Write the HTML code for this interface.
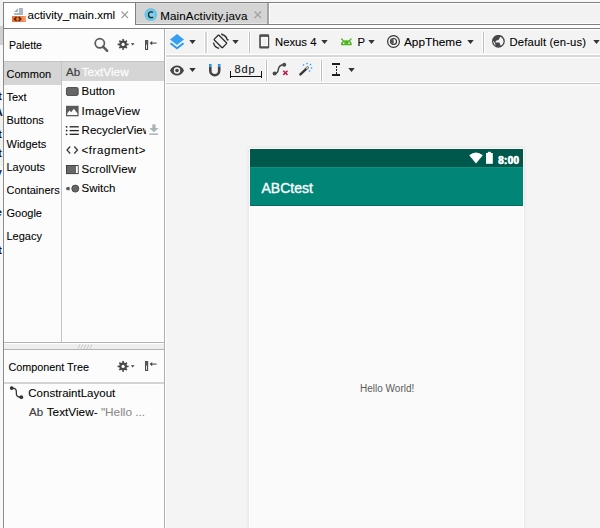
<!DOCTYPE html>
<html><head><meta charset="utf-8">
<style>
*{box-sizing:border-box;margin:0;padding:0}
html,body{width:600px;height:528px;overflow:hidden;background:#f3f3f3;font-family:"Liberation Sans",sans-serif;color:#000}
.a{position:absolute}
.t{position:absolute;white-space:pre;line-height:1;-webkit-text-stroke:0.08px currentColor}
.ln{position:absolute;background:#7f7f7f}
</style></head><body>
<!-- left artifact strip -->
<div class="a" style="left:0;top:0;width:3px;height:26px;background:#f0f0f0"></div>
<div class="a" style="left:0;top:26px;width:3px;height:19px;background:#d0d0d0"></div>
<div class="a" style="left:0;top:45px;width:3px;height:483px;background:#f8f8f8"></div>

<!-- left artifacts -->
<div class="a" style="left:0;top:108px;width:3px;height:58px;background:#eef2ea"></div>
<div class="a" style="left:0;top:85px;width:3px;height:180px;overflow:hidden">
<div class="t" style="left:-2px;top:6.07px;font-size:11.5px;color:#1a0a10;font-weight:bold">t</div>

<div class="t" style="left:-5.5px;top:22.07px;font-size:11.5px;color:#1a1a3a;font-weight:bold">A</div>

<div class="t" style="left:-2px;top:44.07px;font-size:11.5px;color:#1a0a10;font-weight:bold">t</div>

<div class="t" style="left:-2px;top:63.07px;font-size:11.5px;color:#1a0a10;font-weight:bold">t</div>

<div class="t" style="left:-4.5px;top:82.07px;font-size:11.5px;color:#2a2a5a;font-weight:bold">v</div>

<div class="t" style="left:-4.5px;top:122.07px;font-size:11.5px;color:#0a1a3a;font-weight:bold">e</div>

<div class="t" style="left:-2px;top:160.07px;font-size:11.5px;color:#1a0a10;font-weight:bold">t</div>

</div>
<!-- tab bar -->
<div class="a" style="left:3px;top:0;width:597px;height:2px;background:#f7f7f7"></div>
<div class="a" style="left:269px;top:3px;width:331px;height:20px;background:#f2f2f2"></div>
<div class="a" style="left:269px;top:3px;width:331px;height:1px;background:#fff"></div>
<div class="a" style="left:269px;top:23px;width:331px;height:1px;background:#fff"></div>
<div class="ln" style="left:135px;top:24px;width:465px;height:1px"></div>
<div class="a" style="left:135px;top:25px;width:465px;height:3px;background:#fff"></div>
<div class="ln" style="left:3px;top:2px;width:597px;height:1px"></div>
<div class="ln" style="left:3px;top:28px;width:597px;height:1px"></div>
<!-- tab1 -->
<div class="a" style="left:4px;top:3px;width:131px;height:25px;background:#fff"></div>
<div class="ln" style="left:3px;top:2px;width:1px;height:27px"></div>
<!-- tab2 -->
<div class="a" style="left:136px;top:3px;width:131px;height:21px;background:#d4d4d4"></div>
<div class="a" style="left:136px;top:3px;width:131px;height:1px;background:#dedede"></div>
<div class="a" style="left:136px;top:23px;width:131px;height:1px;background:#e4e4e4"></div>
<div class="ln" style="left:135px;top:2px;width:1px;height:23px"></div>
<div class="a" style="left:267px;top:3px;width:2px;height:21px;background:#a3a3a3"></div><div class="a" style="left:269px;top:3px;width:1px;height:21px;background:#fff"></div>

<!-- xml icon -->
<svg class="a" style="left:12px;top:7px" width="16" height="16" viewBox="0 0 16 16">
  <path d="M6.9 1 L11 1 L11 7.9 L2 7.9 L2 5.9 L6.9 5.9 Z" fill="#a9b8c5"/>
  <path d="M2 5.1 L5.9 1.2 L5.9 5.1 Z" fill="#9aabb9"/>
  <defs><linearGradient id="og" x1="0" x2="1"><stop offset="0.55" stop-color="#f3742f"/><stop offset="1" stop-color="#f5a27b"/></linearGradient></defs>
  <rect x="0" y="9" width="14" height="6" fill="url(#og)"/>
  <path d="M4.6 10 L2.5 12 L4.6 14 M6.6 10 L8.7 12 L6.6 14" stroke="#3a2a22" stroke-width="1.5" fill="none"/>
</svg>
<div class="t" style="left:27.5px;top:10.30px;font-size:11.5px">activity_main.xml</div>
<svg class="a" style="left:121px;top:11px" width="8" height="8" viewBox="0 0 8 8"><path d="M0.5 0.5 L7 7 M7 0.5 L0.5 7" stroke="#a0a0a0" stroke-width="1.2"/></svg>

<!-- java icon -->
<svg class="a" style="left:143px;top:7px" width="16" height="16" viewBox="0 0 16 16">
  <circle cx="7.85" cy="7.55" r="7.1" fill="#e9d4cc"/>
  <circle cx="7.85" cy="7.55" r="6.5" fill="#6ec6e6"/>
  <circle cx="7.85" cy="7.55" r="3.5" fill="#7fd2ef"/>
  <path d="M9.9 5.5 Q9.2 4.9 8.1 4.9 Q5.5 4.9 5.5 7.8 Q5.5 10.6 8.1 10.6 Q9.2 10.6 9.9 10.1" stroke="#222" stroke-width="1.3" fill="none"/>
</svg>
<div class="t" style="left:160.3px;top:9.58px;font-size:11.6px;letter-spacing:0.1px">MainActivity.java</div>
<svg class="a" style="left:254px;top:11px" width="8" height="8" viewBox="0 0 8 8"><path d="M0.5 0.5 L7 7 M7 0.5 L0.5 7" stroke="#a0a0a0" stroke-width="1.2"/></svg>

<!-- palette panel -->
<div class="a" style="left:3px;top:29px;width:1px;height:499px;background:#8c8c8c"></div>
<div class="a" style="left:4px;top:29px;width:160px;height:313px;background:#fcfcfc"></div>
<div class="a" style="left:164px;top:29px;width:1px;height:499px;background:#b0b0b0"></div>
<div class="a" style="left:165px;top:29px;width:1px;height:499px;background:#fff"></div>
<div class="t" style="left:9.0px;top:39.83px;font-size:10.6px">Palette</div>


<!-- palette header icons -->
<svg class="a" style="left:92.3px;top:36.4px" width="18" height="18" viewBox="0 0 18 18">
  <circle cx="7.8" cy="7.3" r="4.6" stroke="#5a5a5a" stroke-width="1.7" fill="none"/>
  <path d="M11 10.6 L15.2 14.8" stroke="#5a5a5a" stroke-width="2.4" stroke-linecap="round"/>
</svg>
<svg class="a" style="left:116px;top:37px" width="20" height="15" viewBox="0 0 20 15">
  <g transform="translate(7.1,7.4)" fill="#4a4a4a">
    <circle r="3.8"/>
    <rect x="-0.8" y="-5.5" width="1.6" height="11"/>
    <rect x="-5.5" y="-0.8" width="11" height="1.6"/>
    <rect x="-0.8" y="-5.3" width="1.6" height="10.6" transform="rotate(45)"/>
    <rect x="-0.8" y="-5.3" width="1.6" height="10.6" transform="rotate(-45)"/>
  </g>
  <circle cx="7.1" cy="7.4" r="1.6" fill="#fcfcfc"/>
  <path d="M14.8 6.3 L18.6 6.3 L16.7 8.6 Z" fill="#444"/>
</svg>
<svg class="a" style="left:144px;top:38px" width="16" height="14" viewBox="0 0 16 14">
  <rect x="1.6" y="2.6" width="2" height="8.8" stroke="#333" stroke-width="1" fill="#fff"/>
  <rect x="1.1" y="2.1" width="3" height="4.5" fill="#555"/>
  <path d="M7 5.1 L12.6 5.1" stroke="#666" stroke-width="1.3"/>
  <path d="M5.6 5.1 L8.2 3 L8.2 7.2 Z" fill="#444"/>
</svg>

<!-- toolbar 1 -->
<div class="a" style="left:166px;top:29px;width:434px;height:1px;background:#fff"></div>
<div class="a" style="left:166px;top:30px;width:434px;height:24px;background:#f3f3f3"></div>
<div class="a" style="left:166px;top:54px;width:434px;height:1px;background:#fff"></div>
<div class="a" style="left:166px;top:55px;width:434px;height:2px;background:#d6d6d6"></div>
<div class="a" style="left:166px;top:57px;width:434px;height:1px;background:#fff"></div>
<!-- toolbar 2 -->
<div class="a" style="left:166px;top:58px;width:434px;height:24px;background:#f3f3f3"></div>
<div class="a" style="left:166px;top:82px;width:434px;height:1px;background:#fff"></div>
<div class="a" style="left:166px;top:83px;width:434px;height:1px;background:#c9c9c9"></div>
<div class="a" style="left:166px;top:84px;width:434px;height:2px;background:#f8f8f8"></div>

<!-- layers icon -->
<svg class="a" style="left:168px;top:32px" width="18" height="20" viewBox="0 0 18 20">
  <path d="M9 2 L16 7.5 L9 13 L2 7.5 Z" fill="#359ff0"/>
  <path d="M2.5 11.2 L9 16.2 L15.5 11.2" stroke="#2d98ee" stroke-width="2" fill="none"/>
</svg>
<svg class="a" style="left:189px;top:39px" width="9" height="6"><path d="M0.3 0.9 L6.7 0.9 L3.5 5.1 Z" fill="#333"/></svg>
<div class="a" style="left:204px;top:32px;width:4px;height:21px;background:#fff"></div><div class="a" style="left:205px;top:32px;width:2px;height:21px;background:#d4d4d4"></div>
<!-- rotate icon -->
<svg class="a" style="left:212px;top:33px" width="18" height="18" viewBox="0 0 18 18">
  <path d="M9.6 1.5 A7 7 0 0 1 15.3 7.2 M7.2 15.3 A7 7 0 0 1 1.5 9.6" stroke="#2e2e2e" stroke-width="1.3" fill="none"/>
  <path d="M9.2 1.2 L10.6 1.2 M16 7.6 L15.8 6" stroke="#2e2e2e" stroke-width="1.3"/>
  <rect x="5.1" y="2.5" width="6.6" height="11.8" rx="0.6" transform="rotate(-45 8.4 8.4)" stroke="#2e2e2e" stroke-width="1.3" fill="#f2f2f2"/>
</svg>
<svg class="a" style="left:232px;top:39px" width="9" height="6"><path d="M0.3 0.9 L6.7 0.9 L3.5 5.1 Z" fill="#333"/></svg>
<div class="a" style="left:248px;top:32px;width:3px;height:21px;background:#fff"></div><div class="a" style="left:249px;top:32px;width:1px;height:21px;background:#bdbdbd"></div>
<!-- device -->
<svg class="a" style="left:258px;top:33px" width="13" height="17" viewBox="0 0 13 17">
  <rect x="1.2" y="1.2" width="10" height="14.3" rx="1.3" fill="#4e4e4e"/>
  <rect x="2.9" y="3.9" width="7.1" height="9.35" fill="#fafafa"/>
  <rect x="4.3" y="5.2" width="4.3" height="6.8" fill="#f0f0f0"/>
</svg>
<div class="t" style="left:275.0px;top:36.83px;font-size:11.3px">Nexus 4</div>
<svg class="a" style="left:321px;top:39px" width="9" height="6"><path d="M0.3 0.9 L6.7 0.9 L3.5 5.1 Z" fill="#333"/></svg>
<!-- android -->
<svg class="a" style="left:339px;top:36px" width="15" height="11" viewBox="0 0 15 11">
  <path d="M2 9.2 L2 8 Q2.4 4.3 7.35 4.3 Q12.3 4.3 12.7 8 L12.7 9.2 Z" fill="#4fb41f"/>
  <path d="M2.6 3 L5 5.4 M12.1 3 L9.7 5.4" stroke="#4fb41f" stroke-width="1.3" stroke-linecap="round"/>
  <rect x="4" y="6.4" width="1.4" height="1.6" fill="#f2f2f2"/><rect x="9.3" y="6.4" width="1.4" height="1.6" fill="#f2f2f2"/>
</svg>
<div class="t" style="left:357.5px;top:36.83px;font-size:11.3px">P</div>
<svg class="a" style="left:368px;top:39px" width="9" height="6"><path d="M0.3 0.9 L6.7 0.9 L3.5 5.1 Z" fill="#333"/></svg>
<!-- theme icon -->
<svg class="a" style="left:385px;top:34px" width="16" height="16" viewBox="0 0 16 16">
  <circle cx="8.5" cy="7.5" r="5.9" stroke="#333" stroke-width="1.2" fill="none"/>
  <circle cx="8.5" cy="7.5" r="3.0" stroke="#333" stroke-width="1.2" fill="#fff"/>
  <path d="M8.3 4.5 A3 3 0 0 0 8.3 10.5 Q9.3 7.5 8.3 4.5 Z" fill="#555"/>
</svg>
<div class="t" style="left:404.0px;top:36.81px;font-size:11.8px">AppTheme</div>
<svg class="a" style="left:467px;top:39px" width="9" height="6"><path d="M0.3 0.9 L6.7 0.9 L3.5 5.1 Z" fill="#333"/></svg>
<div class="a" style="left:482px;top:32px;width:3px;height:21px;background:#fff"></div><div class="a" style="left:483px;top:32px;width:1px;height:21px;background:#bdbdbd"></div>
<!-- globe -->
<svg class="a" style="left:491px;top:35px" width="15" height="15" viewBox="0 0 15 15">
  <defs><clipPath id="gc"><circle cx="7.4" cy="6.3" r="5.1"/></clipPath></defs>
  <circle cx="7.4" cy="6.3" r="6.4" fill="#474747"/>
  <g clip-path="url(#gc)" fill="#f4f4f4">
    <path d="M9.2 1.8 Q13 3 13 7 Q13 10 9.8 10.8 L9 9.2 Q9.3 7.8 8 7.5 L4.6 7.4 Q4.2 6.2 5.6 5.5 Q7.8 5.2 8.3 3.8 Z"/>
    <path d="M1.5 5.6 Q2.8 5.6 3.4 7.2 Q4.4 8.6 4.4 10 Q4.8 11.2 6 12.5 Q1.5 12 1.5 5.6 Z"/>
  </g>
</svg>
<div class="t" style="left:509.5px;top:36.83px;font-size:11.3px;letter-spacing:0.13px">Default (en-us)</div>
<svg class="a" style="left:593px;top:39px" width="9" height="6"><path d="M0.3 0.9 L6.7 0.9 L3.5 5.1 Z" fill="#333"/></svg>

<!-- toolbar 2 icons -->
<svg class="a" style="left:169px;top:63.5px" width="16" height="13" viewBox="0 0 16 13">
  <path d="M1 6.5 Q3.5 1.5 8 1.5 Q12.5 1.5 15 6.5 Q12.5 11.5 8 11.5 Q3.5 11.5 1 6.5 Z" fill="#454545"/>
  <circle cx="8" cy="6.5" r="3.2" fill="#f3f3f3"/>
  <circle cx="8" cy="6.5" r="1.8" fill="#454545"/>
</svg>
<svg class="a" style="left:189px;top:67px" width="9" height="6"><path d="M0.3 0.9 L6.7 0.9 L3.5 5.1 Z" fill="#333"/></svg>
<svg class="a" style="left:207px;top:63px" width="15" height="14" viewBox="0 0 15 14">
  <path d="M3.3 3.5 L3.3 7.8 A4.45 4.45 0 0 0 12.2 7.8 L12.2 3.5" stroke="#444" stroke-width="2.6" fill="none"/>
  <rect x="2" y="1" width="2.6" height="2.6" fill="#2196f3"/>
  <rect x="10.9" y="1" width="2.6" height="2.6" fill="#2196f3"/>
</svg>
<div class="a" style="left:230px;top:71px;width:1px;height:7px;background:#111"></div>
<div class="a" style="left:261px;top:71px;width:1px;height:7px;background:#111"></div>
<div class="a" style="left:230px;top:76px;width:32px;height:1px;background:#111"></div>
<div class="t" style="left:234.5px;top:63.79px;font-size:11.0px;color:#111;letter-spacing:0.9px">8dp</div>
<div class="a" style="left:265px;top:60px;width:3px;height:21px;background:#fff"></div><div class="a" style="left:266px;top:60px;width:1px;height:21px;background:#bdbdbd"></div>
<svg class="a" style="left:272px;top:61px" width="19" height="17" viewBox="0 0 19 17">
  <path d="M2.6 12.6 Q5.6 12.8 6.3 8.5 Q7 3.8 12.2 3.8" stroke="#444" stroke-width="1.5" fill="none"/>
  <circle cx="2.6" cy="12.6" r="2" fill="#4a4a4a"/><circle cx="12.2" cy="3.8" r="2" fill="#4a4a4a"/>
  <path d="M11.3 9.7 L15.5 13.9 M15.5 9.7 L11.3 13.9" stroke="#b81e4a" stroke-width="1.5"/>
</svg>
<svg class="a" style="left:297px;top:61px" width="17" height="16" viewBox="0 0 17 16">
  <path d="M3.4 13.4 L10.6 6.6" stroke="#3a3a3a" stroke-width="2.5" stroke-linecap="round"/>
  <path d="M9.7 7.5 L10.7 6.5" stroke="#d8d8d8" stroke-width="1.3" stroke-linecap="round"/>
  <g fill="#2b9cf0"><rect x="5.8" y="3.3" width="1.4" height="1.4"/><rect x="9.3" y="1.8" width="1.4" height="1.4"/><rect x="12.8" y="2.8" width="1.4" height="1.4"/><rect x="13.8" y="6.3" width="1.4" height="1.4"/><rect x="11.8" y="9.3" width="1.4" height="1.4"/></g>
</svg>
<div class="a" style="left:320px;top:60px;width:3px;height:21px;background:#fff"></div><div class="a" style="left:321px;top:60px;width:1px;height:21px;background:#bdbdbd"></div>
<div class="a" style="left:332px;top:63px;width:8px;height:2px;background:#1e1e1e"></div>
<div class="a" style="left:332px;top:74px;width:8px;height:2px;background:#1e1e1e"></div>
<div class="a" style="left:335.5px;top:66px;width:1.6px;height:1.6px;background:#1e1e1e"></div>
<div class="a" style="left:335.5px;top:69px;width:1.6px;height:1.6px;background:#1e1e1e"></div>
<div class="a" style="left:335.5px;top:72px;width:1.6px;height:1.6px;background:#1e1e1e"></div>
<svg class="a" style="left:348px;top:67px" width="9" height="6"><path d="M0.3 0.9 L6.7 0.9 L3.5 5.1 Z" fill="#333"/></svg>


<!-- palette body -->
<div class="a" style="left:4px;top:61px;width:57px;height:24px;background:#d5d5d5"></div>
<div class="a" style="left:62px;top:61px;width:102px;height:20px;background:#d5d5d5"></div>
<div class="a" style="left:61px;top:61px;width:1px;height:281px;background:#c4c4c4"></div>
<div class="a" style="left:4px;top:60px;width:160px;height:1px;background:#fff"></div>
<div class="a" style="left:4px;top:61px;width:160px;height:1px;background:#c3c3c3"></div>
<div class="a" style="left:4px;top:342px;width:160px;height:1px;background:#b4b4b4"></div>
<div class="a" style="left:4px;top:343px;width:160px;height:1px;background:#fff"></div>
<div class="a" style="left:4px;top:344px;width:160px;height:5px;background:#efefef"></div>
<div class="a" style="left:4px;top:349px;width:160px;height:1px;background:#b4b4b4"></div>
<div class="a" style="left:4px;top:350px;width:160px;height:178px;background:#fcfcfc"></div>
<div class="a" style="left:4px;top:381px;width:160px;height:4px;background:#fff"></div><div class="a" style="left:4px;top:382px;width:160px;height:2px;background:#d4d4d4"></div>
<div class="t" style="left:6.5px;top:69.19px;font-size:11.0px">Common</div>

<div class="t" style="left:6.5px;top:92.09px;font-size:11.0px">Text</div>

<div class="t" style="left:6.5px;top:115.09px;font-size:11.0px">Buttons</div>

<div class="t" style="left:6.5px;top:138.69px;font-size:11.0px">Widgets</div>

<div class="t" style="left:6.5px;top:162.29px;font-size:11.0px">Layouts</div>

<div class="t" style="left:6.5px;top:184.89px;font-size:11.0px">Containers</div>

<div class="t" style="left:6.5px;top:207.99px;font-size:11.0px">Google</div>

<div class="t" style="left:6.5px;top:231.09px;font-size:11.0px">Legacy</div>

<div class="t" style="left:66.0px;top:66.77px;font-size:11.5px;color:#404040;-webkit-text-stroke:0.2px #404040">Ab</div>

<div class="t" style="left:81.7px;top:66.51px;font-size:11.8px;color:#fbfbfb;-webkit-text-stroke:0.3px #fbfbfb">TextView</div>

<div class="t" style="left:81.6px;top:86.07px;font-size:11.5px">Button</div>

<div class="t" style="left:81.6px;top:106.07px;font-size:11.5px;letter-spacing:0.2px">ImageView</div>

<div class="a" style="left:0;top:0;width:146px;height:200px;overflow:hidden"><div class="t" style="left:81.6px;top:125.27px;font-size:11.5px">RecyclerView</div>
</div>
<div class="t" style="left:81.6px;top:144.67px;font-size:11.5px;letter-spacing:0.55px">&lt;fragment&gt;</div>

<div class="t" style="left:81.6px;top:164.07px;font-size:11.5px;letter-spacing:0.1px">ScrollView</div>

<div class="t" style="left:81.6px;top:183.37px;font-size:11.5px">Switch</div>

<div class="t" style="left:8.5px;top:361.96px;font-size:10.8px">Component Tree</div>

<div class="t" style="left:28.3px;top:388.37px;font-size:11.5px">ConstraintLayout</div>

<div class="t" style="left:29.0px;top:407.07px;font-size:11.5px;color:#404040;-webkit-text-stroke:0.2px #404040">Ab</div>

<div class="t" style="left:46.7px;top:406.81px;font-size:11.8px">TextView- <span style="color:#8a8a8a">"Hello ...</span></div>


<!-- palette item icons -->
<svg class="a" style="left:65px;top:86px" width="15" height="11" viewBox="0 0 15 11"><rect x="1.45" y="1.55" width="11.7" height="7.9" rx="1.4" fill="#676767" stroke="#444" stroke-width="0.9"/></svg>
<svg class="a" style="left:65px;top:105px" width="15" height="12" viewBox="0 0 15 12"><rect x="1" y="0.8" width="12.6" height="10.5" fill="#5a5a5a"/><path d="M2.2 10 L2.2 8.6 L4.5 5.4 L6.2 7.3 L8.8 3.8 L12.4 8.2 L12.4 10 Z" fill="#fcfcfc"/></svg>
<svg class="a" style="left:65px;top:125px" width="15" height="12" viewBox="0 0 15 12"><g fill="#222"><circle cx="1.6" cy="1.8" r="0.9"/><circle cx="1.6" cy="5.6" r="0.9"/><circle cx="1.6" cy="9.3" r="0.9"/><rect x="4.6" y="1.15" width="9.2" height="1.3"/><rect x="4.6" y="4.95" width="9.2" height="1.3"/><rect x="4.6" y="8.65" width="9.2" height="1.3"/></g></svg>
<svg class="a" style="left:146px;top:123px" width="14" height="13" viewBox="0 0 14 13"><rect x="6.3" y="1.4" width="3.3" height="4" fill="#aab2ba"/><path d="M3.3 4.9 L12.6 4.9 L7.95 9.2 Z" fill="#aab2ba"/><rect x="3.2" y="10.4" width="8.8" height="1.5" fill="#aab2ba"/></svg>
<svg class="a" style="left:65px;top:145px" width="15" height="10" viewBox="0 0 15 10"><path d="M5.2 1.5 L2 5 L5.2 8.5 M9.3 1.5 L12.5 5 L9.3 8.5" stroke="#3a3a3a" stroke-width="1.3" fill="none"/></svg>
<svg class="a" style="left:65px;top:164px" width="15" height="11" viewBox="0 0 15 11"><rect x="1.45" y="1.45" width="11.7" height="8.2" fill="#676767" stroke="#3a3a3a" stroke-width="0.9"/><rect x="11" y="2" width="1.8" height="7" fill="#fcfcfc"/></svg>
<svg class="a" style="left:65px;top:183px" width="15" height="11" viewBox="0 0 15 11"><path d="M4.6 3.9 L2.8 3.9 Q1 3.9 1 5.6 Q1 7.3 2.8 7.3 L4.6 7.3 Z" fill="#555"/><circle cx="10.3" cy="5.6" r="3.5" fill="#676767" stroke="#444" stroke-width="0.9"/></svg>

<!-- splitter grip -->
<svg class="a" style="left:77px;top:344px" width="17" height="5" viewBox="0 0 17 5"><path d="M1 4.5 L3 0.5 M4 4.5 L6 0.5 M7 4.5 L9 0.5 M10 4.5 L12 0.5 M13 4.5 L15 0.5" stroke="#a8a8a8" stroke-width="0.9" stroke-dasharray="1 0.6"/></svg>

<!-- component tree header icons -->
<svg class="a" style="left:116px;top:359px" width="20" height="15" viewBox="0 0 20 15">
  <g transform="translate(7.1,7.4)" fill="#4a4a4a">
    <circle r="3.8"/>
    <rect x="-0.8" y="-5.5" width="1.6" height="11"/>
    <rect x="-5.5" y="-0.8" width="11" height="1.6"/>
    <rect x="-0.8" y="-5.3" width="1.6" height="10.6" transform="rotate(45)"/>
    <rect x="-0.8" y="-5.3" width="1.6" height="10.6" transform="rotate(-45)"/>
  </g>
  <circle cx="7.1" cy="7.4" r="1.6" fill="#fcfcfc"/>
  <path d="M14.8 6.3 L18.6 6.3 L16.7 8.6 Z" fill="#444"/>
</svg>
<svg class="a" style="left:144px;top:359px" width="16" height="14" viewBox="0 0 16 14">
  <rect x="1.6" y="2.6" width="2" height="8.8" stroke="#333" stroke-width="1" fill="#fff"/>
  <rect x="1.1" y="2.1" width="3" height="4.5" fill="#555"/>
  <path d="M7 5.1 L12.6 5.1" stroke="#666" stroke-width="1.3"/>
  <path d="M5.6 5.1 L8.2 3 L8.2 7.2 Z" fill="#444"/>
</svg>
<!-- constraint layout icon -->
<svg class="a" style="left:9px;top:385px" width="15" height="15" viewBox="0 0 15 15">
  <path d="M2.7 3.1 Q6.8 2.9 7.3 5.8 L7.4 9.4 Q7.8 12.2 12.3 12.2" stroke="#333" stroke-width="1.25" fill="none"/>
  <circle cx="2.7" cy="3.1" r="1.9" fill="#333"/><circle cx="12.3" cy="12.2" r="1.9" fill="#333"/>
</svg>
<!-- canvas + phone -->
<div class="a" style="left:166px;top:86px;width:434px;height:442px;background:#f4f4f4"></div>
<div class="a" style="left:249px;top:148px;width:275px;height:390px;background:#fff;box-shadow:0 0 3px 1px rgba(0,0,0,0.06)"></div>
<div class="a" style="left:250px;top:149px;width:273px;height:379px;background:#fafafa"></div>
<div class="a" style="left:250px;top:149px;width:273px;height:18px;background:#00574b"></div>
<div class="a" style="left:250px;top:167px;width:273px;height:39px;background:#008577"></div><div class="a" style="left:250px;top:167px;width:273px;height:1px;background:#11907f"></div><div class="a" style="left:250px;top:205px;width:273px;height:1px;background:#006f62"></div><div class="a" style="left:250px;top:206px;width:273px;height:2px;background:#fff"></div>
<svg class="a" style="left:468px;top:151.5px" width="16" height="13" viewBox="0 0 16 13"><path d="M1.2 3.2 Q8 -2 14.8 3.2 L8 11.6 Z" fill="#fff"/></svg>
<svg class="a" style="left:485px;top:151px" width="9" height="14" viewBox="0 0 9 14"><rect x="2.8" y="0.8" width="3" height="1.5" fill="#fff"/><rect x="1" y="2" width="6.8" height="10.8" fill="#fff"/></svg>
<div class="t" style="left:498px;top:156.03px;font-size:10px;color:#fff;font-weight:bold;letter-spacing:0.3px;-webkit-text-stroke:0.3px #fff;text-shadow:0.5px 0 0 #fff">8:00</div>

<div class="t" style="left:261.5px;top:180.55px;font-size:14px;color:#fff;-webkit-text-stroke:0.35px #fff">ABCtest</div>

<div class="t" style="left:360px;top:384.24px;font-size:10px;color:#5a5a5a;-webkit-text-stroke:0">Hello World!</div>


</body></html>
